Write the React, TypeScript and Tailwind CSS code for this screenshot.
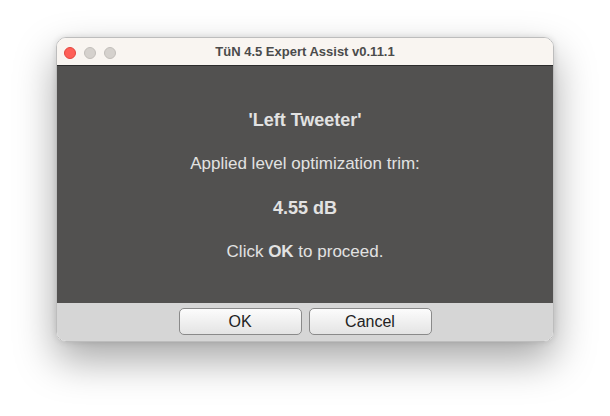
export default function App() {
  const font = { fontFamily: '"Liberation Sans", Arial, Helvetica, sans-serif' };
  return (
    <div className="w-[610px] h-[416px] bg-white flex justify-center pt-[37px]" style={font}>
      <div className="w-[498px] h-[305px] flex flex-col rounded-[10px] overflow-hidden border border-[#bdbdbd] shadow-[0_18px_40px_rgba(0,0,0,0.35),0_0_6px_rgba(0,0,0,0.12)]">
        {/* title bar */}
        <div className="h-[28px] shrink-0 bg-[#f9f5f1] border-b border-[#2c2c2c] flex items-center relative">
          <div className="absolute left-[7px] top-[9px] flex gap-[8px]">
            <span className="w-[12px] h-[12px] rounded-full bg-[#fe5f57] border border-[#e2463f]" />
            <span className="w-[12px] h-[12px] rounded-full bg-[#d5d1cd] border border-[#c2beba]" />
            <span className="w-[12px] h-[12px] rounded-full bg-[#d5d1cd] border border-[#c2beba]" />
          </div>
          <div className="w-full text-center text-[13px] font-bold text-[#4b4b4b] pt-[1px]">TüN 4.5 Expert Assist v0.11.1</div>
        </div>
        {/* message body */}
        <div className="h-[237px] shrink-0 bg-[#525150] flex flex-col items-center justify-center gap-[24px] pt-[3px] text-[17px] text-[#e2e2e2]">
          <div className="h-[20px] leading-[20px] font-bold text-[18px]">'Left Tweeter'</div>
          <div className="h-[20px] leading-[20px]">Applied level optimization trim:</div>
          <div className="h-[20px] leading-[20px] font-bold text-[18px]">4.55 dB</div>
          <div className="h-[20px] leading-[20px]">
            Click <span className="font-bold">OK</span> to proceed.
          </div>
        </div>
        {/* buttons */}
        <div className="flex-1 bg-[#d6d6d6] flex justify-center items-start pt-[5px] gap-[7px]">
          <button className="w-[123px] h-[27px] rounded-[5px] border border-[#8a8a8a] bg-gradient-to-b from-[#fcfcfc] to-[#e4e4e4] text-[16px] text-[#222] leading-none">
            OK
          </button>
          <button className="w-[123px] h-[27px] rounded-[5px] border border-[#8a8a8a] bg-gradient-to-b from-[#fcfcfc] to-[#e4e4e4] text-[16px] text-[#222] leading-none">
            Cancel
          </button>
        </div>
      </div>
    </div>
  );
}
